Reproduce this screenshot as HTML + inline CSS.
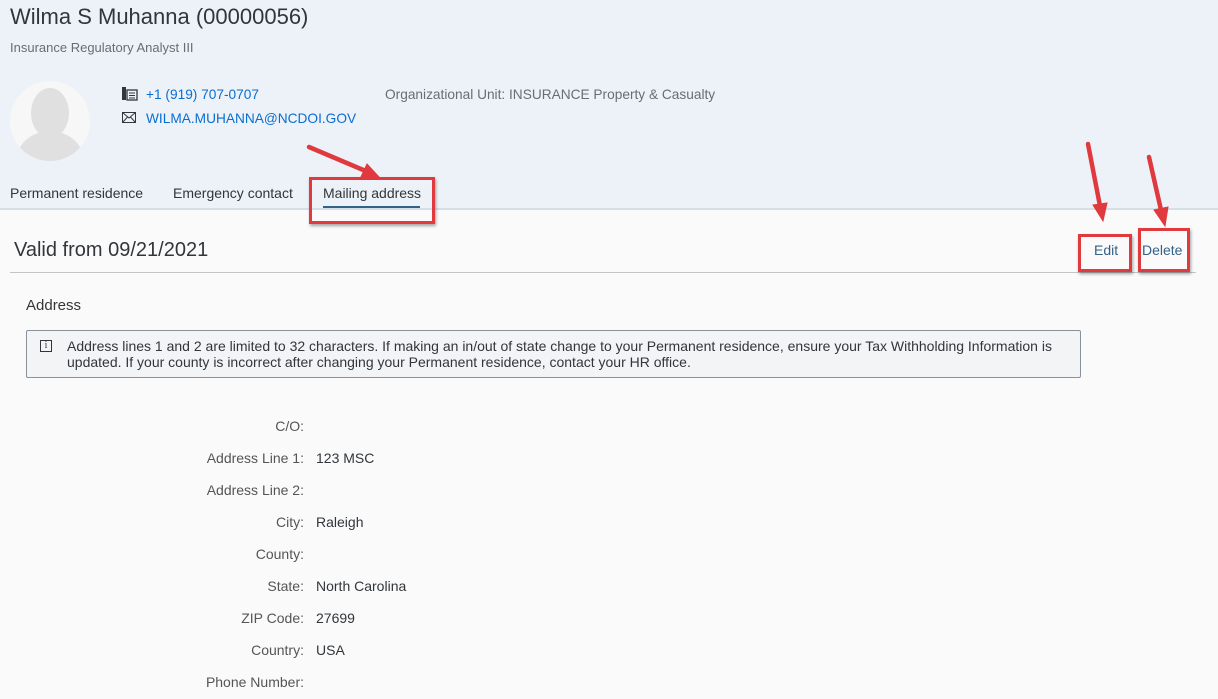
<!DOCTYPE html>
<html><head><meta charset="utf-8"><style>
body{margin:0;width:1218px;height:699px;overflow:hidden;background:#fafafa;font-family:"Liberation Sans",sans-serif;position:relative;color:#32363a}
.a{position:absolute;white-space:nowrap}
#hdr{position:absolute;left:0;top:0;width:1218px;height:208px;background:#edf2f8;border-bottom:2px solid #d5dfea}
.lbl{position:absolute;right:914px;font-size:14px;color:#555}
.val{position:absolute;left:316px;font-size:14px;color:#32363a}
.box{position:absolute;border:3px solid #e0393e;box-shadow:1px 2px 3px rgba(0,0,0,.35)}
</style></head><body>
<div id="hdr"></div>
<div class="a" style="left:10px;top:4px;font-size:22px;color:#32363a">Wilma S Muhanna (00000056)</div>
<div class="a" style="left:10px;top:40px;font-size:13px;color:#6a6d70">Insurance Regulatory Analyst III</div>
<svg class="a" style="left:10px;top:81px" width="80" height="80" viewBox="0 0 80 80"><defs><clipPath id="c"><circle cx="40" cy="40" r="40"/></clipPath></defs><circle cx="40" cy="40" r="40" fill="#f7f7f7"/><g clip-path="url(#c)" fill="#e0e0e0"><ellipse cx="40" cy="32" rx="19" ry="25"/><path d="M4 80 Q10 58 28 52 L52 52 Q70 58 76 80Z"/></g></svg>
<svg class="a" style="left:122px;top:87px" width="16" height="14"><rect x="0" y="0" width="4" height="13" fill="#32363a"/><rect x="5" y="3" width="10" height="10" fill="none" stroke="#32363a" stroke-width="1.3"/><path d="M7 6h6M7 8.5h6M7 11h6" stroke="#32363a"/></svg>
<div class="a" style="left:146px;top:87px;font-size:13.7px;color:#0a6ed1">+1 (919) 707-0707</div>
<svg class="a" style="left:122px;top:112px" width="15" height="12"><rect x="0.5" y="0.5" width="13" height="10" fill="none" stroke="#32363a"/><path d="M0.5 0.5L7 6L13.5 0.5M0.5 10.5L5.5 5M13.5 10.5L8.5 5" fill="none" stroke="#32363a"/></svg>
<div class="a" style="left:146px;top:111px;font-size:13.7px;color:#0a6ed1">WILMA.MUHANNA@NCDOI.GOV</div>
<div class="a" style="left:385px;top:87px;font-size:13.7px;color:#6a6d70">Organizational Unit: INSURANCE Property &amp; Casualty</div>
<div class="a" style="left:10px;top:185px;font-size:14px">Permanent residence</div>
<div class="a" style="left:173px;top:185px;font-size:14px">Emergency contact</div>
<div class="a" style="left:323px;top:185px;font-size:14px">Mailing address</div>
<div class="a" style="left:323px;top:206px;width:97px;height:2px;background:#346187"></div>
<div class="box" style="left:309px;top:177px;width:120px;height:41px"></div>
<div class="a" style="left:14px;top:239px;font-size:20px;color:#32363a">Valid from 09/21/2021</div>
<div class="a" style="left:10px;top:272px;width:1186px;height:1px;background:#c4c4c4"></div>
<div class="a" style="left:1094px;top:242px;font-size:14px;color:#346187">Edit</div>
<div class="a" style="left:1142px;top:242px;font-size:14px;color:#346187">Delete</div>
<div class="box" style="left:1078px;top:234px;width:48px;height:32px"></div>
<div class="box" style="left:1138px;top:228px;width:46px;height:38px"></div>
<svg class="a" style="left:0;top:0" width="1218" height="260"><g stroke="#e0393e" stroke-width="4.5" fill="#e0393e" stroke-linecap="round"><line x1="309" y1="147" x2="368" y2="172"/><polygon points="380,178 360,179 367,164" stroke-width="1"/><line x1="1088" y1="144" x2="1100" y2="206"/><polygon points="1103,221 1093,205 1107,203" stroke-width="1"/><line x1="1149" y1="157" x2="1161" y2="210"/><polygon points="1165,226 1154,210 1168,207" stroke-width="1"/></g></svg>
<div class="a" style="left:26px;top:297px;font-size:15px">Address</div>
<div class="a" style="left:26px;top:330px;width:1053px;height:46px;border:1px solid #89919a;border-radius:2px;background:#f2f4f5"></div>
<div class="a" style="left:40px;top:340px;width:10px;height:10px;border:1px solid #32363a;font-size:10px;line-height:10px;text-align:center;font-family:'Liberation Serif',serif">i</div>
<div class="a" style="left:67px;top:338px;font-size:14px;line-height:16px;white-space:normal;width:1000px">Address lines 1 and 2 are limited to 32 characters. If making an in/out of state change to your Permanent residence, ensure your Tax Withholding Information is updated. If your county is incorrect after changing your Permanent residence, contact your HR office.</div>
<div class="lbl" style="top:418px">C/O:</div>
<div class="lbl" style="top:450px">Address Line 1:</div><div class="val" style="top:450px">123 MSC</div>
<div class="lbl" style="top:482px">Address Line 2:</div>
<div class="lbl" style="top:514px">City:</div><div class="val" style="top:514px">Raleigh</div>
<div class="lbl" style="top:546px">County:</div>
<div class="lbl" style="top:578px">State:</div><div class="val" style="top:578px">North Carolina</div>
<div class="lbl" style="top:610px">ZIP Code:</div><div class="val" style="top:610px">27699</div>
<div class="lbl" style="top:642px">Country:</div><div class="val" style="top:642px">USA</div>
<div class="lbl" style="top:674px">Phone Number:</div>
</body></html>
